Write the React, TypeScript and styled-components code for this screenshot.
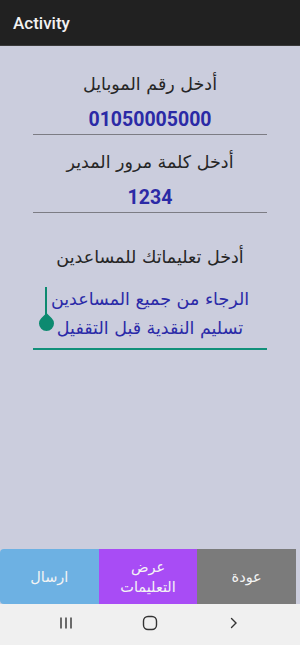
import styled, { createGlobalStyle } from "styled-components";

const GlobalStyle = createGlobalStyle`
  html, body {
    margin: 0;
    padding: 0;
    background: #cbcddd;
  }
  #root {
    height: 645px;
  }
`;

export default function App() {
  return (
    <>
      <GlobalStyle />
      <Screen>
        <TitleBar>Activity</TitleBar>

        <Content>
          <Label $top={26}>أدخل رقم الموبايل</Label>
          <Field>
            <Value>01050005000</Value>
          </Field>

          <Label $top={15}>أدخل كلمة مرور المدير</Label>
          <Field>
            <Value>1234</Value>
          </Field>

          <Label $top={32}>أدخل تعليماتك للمساعدين</Label>
          <NoteField>
            <Cursor>
              <CursorLine />
              <CursorDrop />
            </Cursor>
            <NoteText>
              الرجاء من جميع المساعدين
              <br />
              تسليم النقدية قبل التقفيل
            </NoteText>
          </NoteField>
        </Content>

        <ButtonRow>
          <ActionButton $bg="#6db1e3" $first>ارسال</ActionButton>
          <ActionButton $bg="#a84cf5">
            عرض
            <br />
            التعليمات
          </ActionButton>
          <ActionButton $bg="#7b7b7b">عودة</ActionButton>
        </ButtonRow>

        <NavBar>
          <NavIcon>
            <svg width="14" height="14" viewBox="0 0 14 14">
              <path d="M2 1.5v11M7 1.5v11M12 1.5v11" stroke="#333" strokeWidth="1.4" fill="none" />
            </svg>
          </NavIcon>
          <NavIcon>
            <svg width="16" height="16" viewBox="0 0 16 16">
              <rect x="1.5" y="1.5" width="13" height="13" rx="4.5" stroke="#333" strokeWidth="1.4" fill="none" />
            </svg>
          </NavIcon>
          <NavIcon>
            <svg width="14" height="14" viewBox="0 0 14 14">
              <path d="M4.5 2.5l4.5 4.5-4.5 4.5" stroke="#333" strokeWidth="1.4" fill="none" strokeLinecap="round" />
            </svg>
          </NavIcon>
        </NavBar>
      </Screen>
    </>
  );
}

const Screen = styled.div`
  height: 645px;
  display: flex;
  flex-direction: column;
  background: #cbcddd;
  font-family: "DejaVu Sans", "Noto Sans", sans-serif;
`;

const TitleBar = styled.div`
  height: 46px;
  background: #212121;
  color: #f2f2f2;
  font-family: Roboto, "Liberation Sans", sans-serif;
  font-weight: 500;
  font-size: 17px;
  display: flex;
  align-items: center;
  padding-left: 13px;
  border-bottom: 1px solid #3a3a3a;
  box-sizing: border-box;
`;

const Content = styled.div`
  flex: 1;
  display: flex;
  flex-direction: column;
  align-items: stretch;
  padding: 0 33px;
  direction: rtl;
`;

const Label = styled.div<{ $top: number }>`
  margin-top: ${(p) => p.$top}px;
  text-align: center;
  font-size: 17.5px;
  color: #262626;
  line-height: 24px;
`;

const Field = styled.div`
  border-bottom: 1.5px solid #7c7c84;
  padding: 12px 0 2px;
  text-align: center;
`;

const Value = styled.div`
  font-family: Roboto, "Liberation Sans", sans-serif;
  font-weight: 700;
  font-size: 19.5px;
  line-height: 24px;
  color: #2b2aa6;
  direction: ltr;
`;

const NoteField = styled.div`
  position: relative;
  margin-top: 8px;
  border-bottom: 2px solid #12907a;
  padding: 8px 0 5px;
  display: flex;
  justify-content: center;
`;

const NoteText = styled.div`
  font-size: 17.5px;
  line-height: 29px;
  color: #2a2aa8;
  text-align: center;
`;

const Cursor = styled.div`
  position: absolute;
  left: 5px;
  top: 10px;
  width: 16px;
  height: 48px;
`;

const CursorLine = styled.div`
  position: absolute;
  left: 7px;
  top: 0;
  width: 2px;
  height: 30px;
  background: #0d8a70;
`;

const CursorDrop = styled.div`
  position: absolute;
  left: 1px;
  top: 29px;
  width: 15px;
  height: 15px;
  background: #0d8a70;
  border-radius: 0 50% 50% 50%;
  transform: rotate(45deg);
`;

const ButtonRow = styled.div`
  display: flex;
  height: 55px;
  padding-right: 4px;
  direction: ltr;
`;

const ActionButton = styled.div<{ $bg: string; $first?: boolean }>`
  flex: 1;
  background: ${(p) => p.$bg};
  color: #f4f4f4;
  font-size: 14.5px;
  line-height: 20px;
  display: flex;
  align-items: center;
  justify-content: center;
  text-align: center;
  border-radius: ${(p) => (p.$first ? "4px 0 0 4px" : "0")};
  direction: rtl;
`;

const NavBar = styled.div`
  height: 41px;
  background: #f0f0f0;
  display: flex;
  align-items: center;
  justify-content: center;
  gap: 44px;
  padding-bottom: 4px;
  box-sizing: border-box;
`;

const NavIcon = styled.div`
  width: 40px;
  display: flex;
  justify-content: center;
`;
